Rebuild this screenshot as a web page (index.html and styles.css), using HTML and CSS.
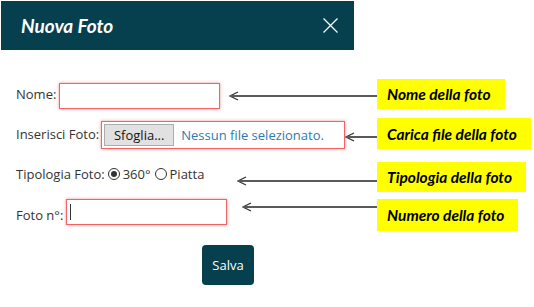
FILE: index.html
```html
<!DOCTYPE html>
<html lang="it">
<head>
    <meta charset="UTF-8">
    <title>Nuova Foto</title>
    <link rel="stylesheet" href="styles.css">
</head>
<body>
    <div class="dialog-head">
        <h1>Nuova Foto</h1>
        <svg class="close" width="15" height="15" viewBox="0 0 15 15">
            <path d="M0.5 0.5 L14.5 14.5 M14.5 0.5 L0.5 14.5" stroke="#fff" stroke-width="1.3" fill="none"/>
        </svg>
    </div>

    <div class="form">
        <!-- nome -->
        <div class="row row-name">
            <div class="left">
                <label>Nome:</label>
                <span class="field field-name"></span>
                <div class="arrow">
                    <svg width="10" height="10" viewBox="0 0 10 10"><polyline points="9,1 1,5 9,9" fill="none" stroke="#333" stroke-width="1.2"/></svg>
                    <span class="shaft"></span>
                </div>
            </div>
            <div class="note">Nome della foto</div>
        </div>

        <!-- file -->
        <div class="row row-file">
            <div class="left">
                <label>Inserisci Foto:</label>
                <span class="file-box">
                    <span class="file-btn">Sfoglia...</span>
                    <span class="file-name">Nessun file selezionato.</span>
                </span>
                <div class="arrow">
                    <svg width="10" height="10" viewBox="0 0 10 10"><polyline points="9,1 1,5 9,9" fill="none" stroke="#333" stroke-width="1.2"/></svg>
                    <span class="shaft"></span>
                </div>
            </div>
            <div class="note">Carica file della foto</div>
        </div>

        <!-- tipologia -->
        <div class="row row-type">
            <div class="left">
                <label>Tipologia Foto:</label>
                <span class="radio checked"></span><span class="opt">360°</span>
                <span class="radio"></span><span class="opt">Piatta</span>
                <div class="arrow">
                    <svg width="10" height="10" viewBox="0 0 10 10"><polyline points="9,1 1,5 9,9" fill="none" stroke="#333" stroke-width="1.2"/></svg>
                    <span class="shaft"></span>
                </div>
            </div>
            <div class="note">Tipologia della foto</div>
        </div>

        <!-- numero -->
        <div class="row row-num">
            <div class="left">
                <label>Foto n°:</label>
                <span class="field field-num"><i class="caret"></i></span>
                <div class="arrow">
                    <svg width="10" height="10" viewBox="0 0 10 10"><polyline points="9,1 1,5 9,9" fill="none" stroke="#333" stroke-width="1.2"/></svg>
                    <span class="shaft"></span>
                </div>
            </div>
            <div class="note">Numero della foto</div>
        </div>

        <div class="actions">
            <button class="save">Salva</button>
        </div>
    </div>
</body>
</html>
```

FILE: styles.css
```css
*{
    margin: 0;
    padding: 0;
    box-sizing: border-box;
}
body{
    background: #fff;
    font-family: "Open Sans", "DejaVu Sans", sans-serif;
    font-size: 13px;
    color: #333;
}

.dialog-head{
    width: 353px;
    height: 49px;
    margin: 1px 0 0 1px;
    background: #06404f;
    display: flex;
    align-items: center;
    justify-content: space-between;
    padding: 0 16px 0 20px;
}
.dialog-head h1{
    font-family: "Lato", sans-serif;
    font-style: italic;
    font-weight: 700;
    font-size: 19px;
    color: #fff;
}

.form{
    padding: 29px 0 0 16px;
}
.row{
    display: grid;
    grid-template-columns: 361px auto;
    justify-content: start;
}
.left{
    display: flex;
    align-items: center;
}
.row-name{ height: 29px; }
.row-file{ height: 30px; margin-top: 10px; }
.row-type{ height: 30px; margin-top: 14px; }
.row-num{ height: 29px; margin-top: 7px; }

.field{
    display: block;
    flex: none;
    width: 161px;
    height: 26px;
    border: 1px solid #f26464;
    box-shadow: 0 0 3px rgba(240, 80, 80, .6);
    background: #fff;
}
.field-name{
    margin: 4px 0 0 3px;
}
.field-num{
    margin: 0 0 6px 3px;
    padding: 4px 0 0 3px;
}
.caret{
    display: block;
    width: 1px;
    height: 16px;
    background: #333;
}

.file-box{
    display: flex;
    flex: none;
    align-items: center;
    width: 244px;
    height: 28px;
    margin: 3px 0 0 2px;
    padding: 0 2px;
    border: 1px solid #f26464;
    box-shadow: 0 0 3px rgba(240, 80, 80, .6);
}
.file-btn{
    width: 70px;
    height: 22px;
    line-height: 20px;
    text-align: center;
    background: #e1e1e1;
    border: 1px solid #adadad;
    color: #111;
}
.file-name{
    margin-left: 7px;
    color: #2b7cb0;
    white-space: nowrap;
}

.radio{
    flex: none;
    width: 12px;
    height: 12px;
    border: 1px solid #333;
    border-radius: 50%;
    margin: 0 3px 0 3px;
    display: flex;
    align-items: center;
    justify-content: center;
}
.radio.checked::after{
    content: "";
    width: 6px;
    height: 6px;
    border-radius: 50%;
    background: #333;
}
.opt{
    margin-right: 1px;
}
.row-type .left{ margin-top: -6px; }

.arrow{
    flex: 1;
    display: flex;
    align-items: center;
}
.arrow svg{
    flex: none;
    margin-right: -9px;
}
.shaft{
    flex: 1;
    height: 2px;
    background: #5a5a5a;
}
.row-name .arrow{ margin: 3px 0 0 9px; }
.row-file .arrow{ margin: 6px 0 0 0; }
.row-type .arrow{ margin: 14px 0 0 32px; }
.row-num .arrow{ margin: 0 0 16px 15px; }

.note{
    background: #ffff00;
    color: #000;
    font-family: "Lato", sans-serif;
    font-style: italic;
    font-weight: 700;
    font-size: 15.5px;
    padding: 0 14px 0 10px;
    display: flex;
    align-items: center;
    white-space: nowrap;
}

.actions{
    padding: 17px 0 0 186px;
}
.save{
    width: 52px;
    height: 40px;
    border: none;
    border-radius: 4px;
    background: #06404f;
    color: #fff;
    font-family: "Open Sans", sans-serif;
    font-size: 13px;
}
```
